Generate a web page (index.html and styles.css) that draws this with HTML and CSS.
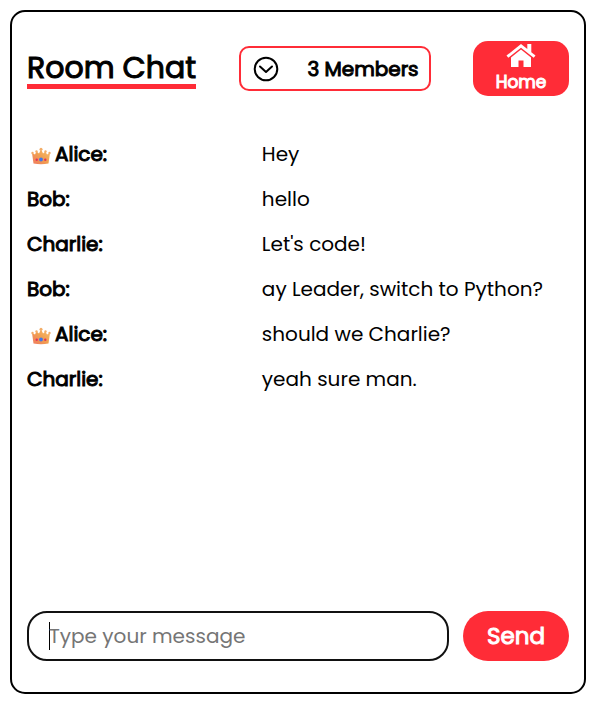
FILE: index.html
```html
<!DOCTYPE html>
<html lang="en">
<head>
<meta charset="utf-8">
<meta name="viewport" content="width=device-width, initial-scale=1">
<title>Room Chat</title>
<link rel="stylesheet" href="styles.css">
</head>
<body>
<svg class="defs" aria-hidden="true">
  <defs>
    <linearGradient id="gold" x1="0" y1="1" x2="1" y2="0">
      <stop offset="0" stop-color="#f07860"/>
      <stop offset="0.5" stop-color="#f0a050"/>
      <stop offset="1" stop-color="#f8c070"/>
    </linearGradient>
    <symbol id="crown" viewBox="0 0 20 18">
      <path d="M2.500 16.500 1 6 4 7.500 5.500 4.500 8 6.500 10 2 12 6.500 14.500 4.500 16 7.500 19 6 17.500 16.500Q10 18 2.500 16.500Z" fill="url(#gold)"/>
      <circle cx="1.500" cy="6" r="1.200" fill="#f3ad68"/>
      <circle cx="5.500" cy="4.500" r="1.200" fill="#f3ad68"/>
      <circle cx="10" cy="2.200" r="1.500" fill="#f3ad68"/>
      <circle cx="14.500" cy="4.500" r="1.200" fill="#f3ad68"/>
      <circle cx="18.500" cy="6" r="1.200" fill="#f3ad68"/>
      <circle cx="10" cy="12.500" r="1.900" fill="#3f78e8"/>
      <circle cx="5.700" cy="12.800" r="1.200" fill="#e4315c"/>
      <circle cx="14.300" cy="12.800" r="1.200" fill="#e4315c"/>
    </symbol>
  </defs>
</svg>
<main class="room">
  <header class="room-header">
    <h1 class="title">Room Chat</h1>
    <button class="members" type="button" aria-expanded="false">
      <svg class="chevron" viewBox="0 0 26 26" aria-hidden="true"><circle cx="13" cy="13" r="11.300"/><path d="m7 10.500 6 5.500 6-5.500"/></svg>
      <span>3 Members</span>
    </button>
    <a class="home" href="#">
      <svg class="house" viewBox="0 0 30 26" aria-hidden="true"><path d="M15 1 .5 12.600l1.800 2.100L15 4.700l12.700 10 1.800-2.100-4.200-3.400V1h-4v5z"/><path d="M15 6.500 5 14.500V24h7.500v-6.500h5V24H25v-9.500z"/></svg>
      <span>Home</span>
    </a>
  </header>
  <ul class="messages">
    <li class="message"><strong class="sender"><svg class="crown" role="img" aria-label="Leader"><use href="#crown"/></svg>Alice:</strong><span>Hey</span></li>
    <li class="message"><strong class="sender">Bob:</strong><span>hello</span></li>
    <li class="message"><strong class="sender">Charlie:</strong><span>Let's code!</span></li>
    <li class="message"><strong class="sender">Bob:</strong><span>ay Leader, switch to Python?</span></li>
    <li class="message"><strong class="sender"><svg class="crown" role="img" aria-label="Leader"><use href="#crown"/></svg>Alice:</strong><span>should we Charlie?</span></li>
    <li class="message"><strong class="sender">Charlie:</strong><span>yeah sure man.</span></li>
  </ul>
  <form class="composer">
    <input class="field" type="text" placeholder="Type your message" aria-label="Type your message" autocomplete="off">
    <button class="send" type="submit">Send</button>
  </form>
</main>
</body>
</html>
```

FILE: styles.css
```css
* { box-sizing: border-box; }

body {
  margin: 0;
  min-height: 100vh;
  display: flex;
  padding: 10px 7px 11px 10px;
  background: #fff;
  color: #000;
  font-family: Poppins, Inter, sans-serif;
  font-size: 20px;
  line-height: 30px;
}

button, input { font: inherit; color: inherit; }

.defs { position: absolute; width: 0; height: 0; }

.room {
  flex: 1;
  min-width: 0;
  display: flex;
  flex-direction: column;
  padding: 29px 15px 31px;
  border: 2px solid #000;
  border-radius: 15px;
}

.room-header {
  display: flex;
  justify-content: space-between;
  align-items: center;
}

/* regular weight thickened by an outline */
.title, .members span, .home span, .sender, .send {
  font-weight: 400;
  -webkit-text-stroke: 1px currentColor;
}

.title {
  margin: 4px 0 0;
  border-bottom: 5px solid #ff2c37;
  font-size: 30px;
  line-height: 32px;
}

.members {
  display: flex;
  align-items: center;
  justify-content: space-between;
  width: 192px;
  height: 45px;
  padding: 0 10px 0 12px;
  border: 2px solid #ff2c37;
  border-radius: 10px;
  background: #fff;
}

.chevron {
  width: 26px;
  height: 26px;
  fill: none;
  stroke: #000;
  stroke-width: 2;
  stroke-linecap: round;
  stroke-linejoin: round;
}

.home {
  display: flex;
  flex-direction: column;
  align-items: center;
  width: 96px;
  height: 55px;
  padding-top: 2px;
  border-radius: 15px;
  background: #ff2c37;
  color: #fff;
  font-size: 17px;
  line-height: 27px;
  text-decoration: none;
}

.house { width: 30px; height: 26px; fill: #fff; }

.messages {
  flex: 1;
  margin: 0;
  padding: 43px 0 0;
  list-style: none;
}

.message {
  display: grid;
  grid-template-columns: 13fr 17fr;
  margin-bottom: 15px;
}

.crown {
  width: 20px;
  height: 18px;
  margin: 0 4px;
  vertical-align: -4px;
}

.composer { display: flex; gap: 14px; }

.field {
  flex: 1;
  min-width: 0;
  height: 50px;
  padding: 0 20px;
  border: 2px solid #111;
  border-radius: 20px;
  outline: 0;
  /* resting caret at the start of the empty field */
  background: linear-gradient(#000, #000) 20px center / 1px 28px no-repeat #fff;
}

.field::placeholder { color: #757575; opacity: 1; }

.send {
  width: 106px;
  height: 50px;
  padding: 0;
  border: 0;
  border-radius: 25px;
  background: #ff2c37;
  color: #fff;
  font-size: 23px;
}
```
